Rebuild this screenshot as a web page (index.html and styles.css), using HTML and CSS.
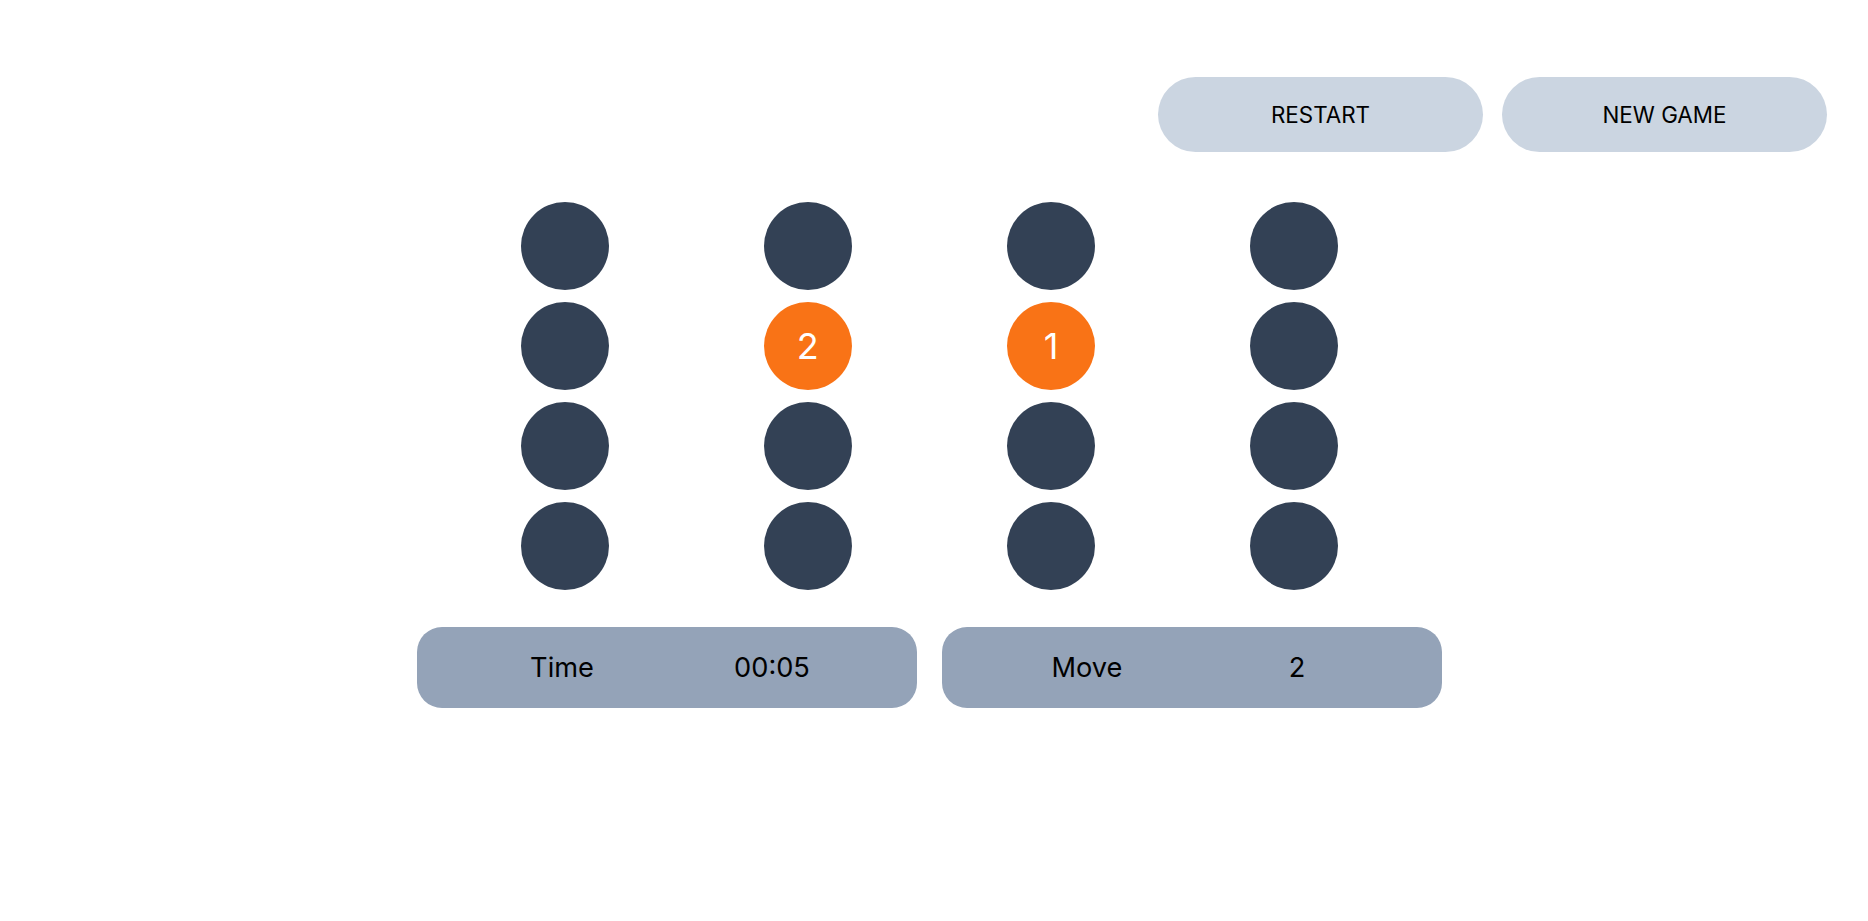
FILE: index.html
```html
<!DOCTYPE html>
<html lang="en">
<head>
  <meta charset="UTF-8" />
  <meta name="viewport" content="width=device-width, initial-scale=1.0"/>
  <title>Memory Game</title>
  <link rel="stylesheet" href="styles.css">
</head>
<body>

  <!-- top buttons -->
  <header class="controls">
    <button class="btn" id="restartBtn">RESTART</button>
    <button class="btn" id="newGameBtn">NEW GAME</button>
  </header>

  <main class="game">
    <div class="board">
      <div class="tile"></div>
      <div class="tile"></div>
      <div class="tile"></div>
      <div class="tile"></div>

      <div class="tile"></div>
      <div class="tile open">2</div>
      <div class="tile open">1</div>
      <div class="tile"></div>

      <div class="tile"></div>
      <div class="tile"></div>
      <div class="tile"></div>
      <div class="tile"></div>

      <div class="tile"></div>
      <div class="tile"></div>
      <div class="tile"></div>
      <div class="tile"></div>
    </div>

    <div class="stats">
      <div class="stat">
        <span class="stat-label">Time</span>
        <span class="stat-value">00:05</span>
      </div>
      <div class="stat">
        <span class="stat-label">Move</span>
        <span class="stat-value">2</span>
      </div>
    </div>
  </main>

</body>
</html>
```

FILE: styles.css
```css
* {
  margin: 0;
  padding: 0;
  box-sizing: border-box;
  font-family: "Inter", "Liberation Sans", sans-serif;
}

body {
  background-color: #ffffff;
  min-height: 100vh;
  padding-right: 9px;
}

.controls {
  display: flex;
  justify-content: flex-end;
  gap: 19px;
  padding: 77px 32px 0;
}

.btn {
  width: 325px;
  height: 75px;
  border: none;
  border-radius: 9999px;
  background-color: #cbd5e1;
  color: #000;
  font-size: 1.4rem;
  font-weight: 400;
  cursor: pointer;
}

.game {
  width: 1025px;
  margin: 50px auto 0;
}

.board {
  display: grid;
  grid-template-columns: repeat(4, 243.3px);
  justify-content: center;
  justify-items: center;
  row-gap: 12px;
}

.tile {
  width: 88px;
  height: 88px;
  border-radius: 50%;
  background-color: #334155;
  color: #fff;
  font-size: 2.25rem;
  display: flex;
  align-items: center;
  justify-content: center;
  cursor: pointer;
}

.tile.open {
  background-color: #f97316;
}

.stats {
  display: flex;
  gap: 25px;
  margin-top: 37px;
}

.stat {
  flex: 1;
  height: 81px;
  border-radius: 25px;
  background-color: #94a3b8;
  display: grid;
  grid-template-columns: 1fr 1fr;
  align-items: center;
  justify-items: center;
  padding: 0 40px;
  font-size: 1.7rem;
  color: #000;
}
```
